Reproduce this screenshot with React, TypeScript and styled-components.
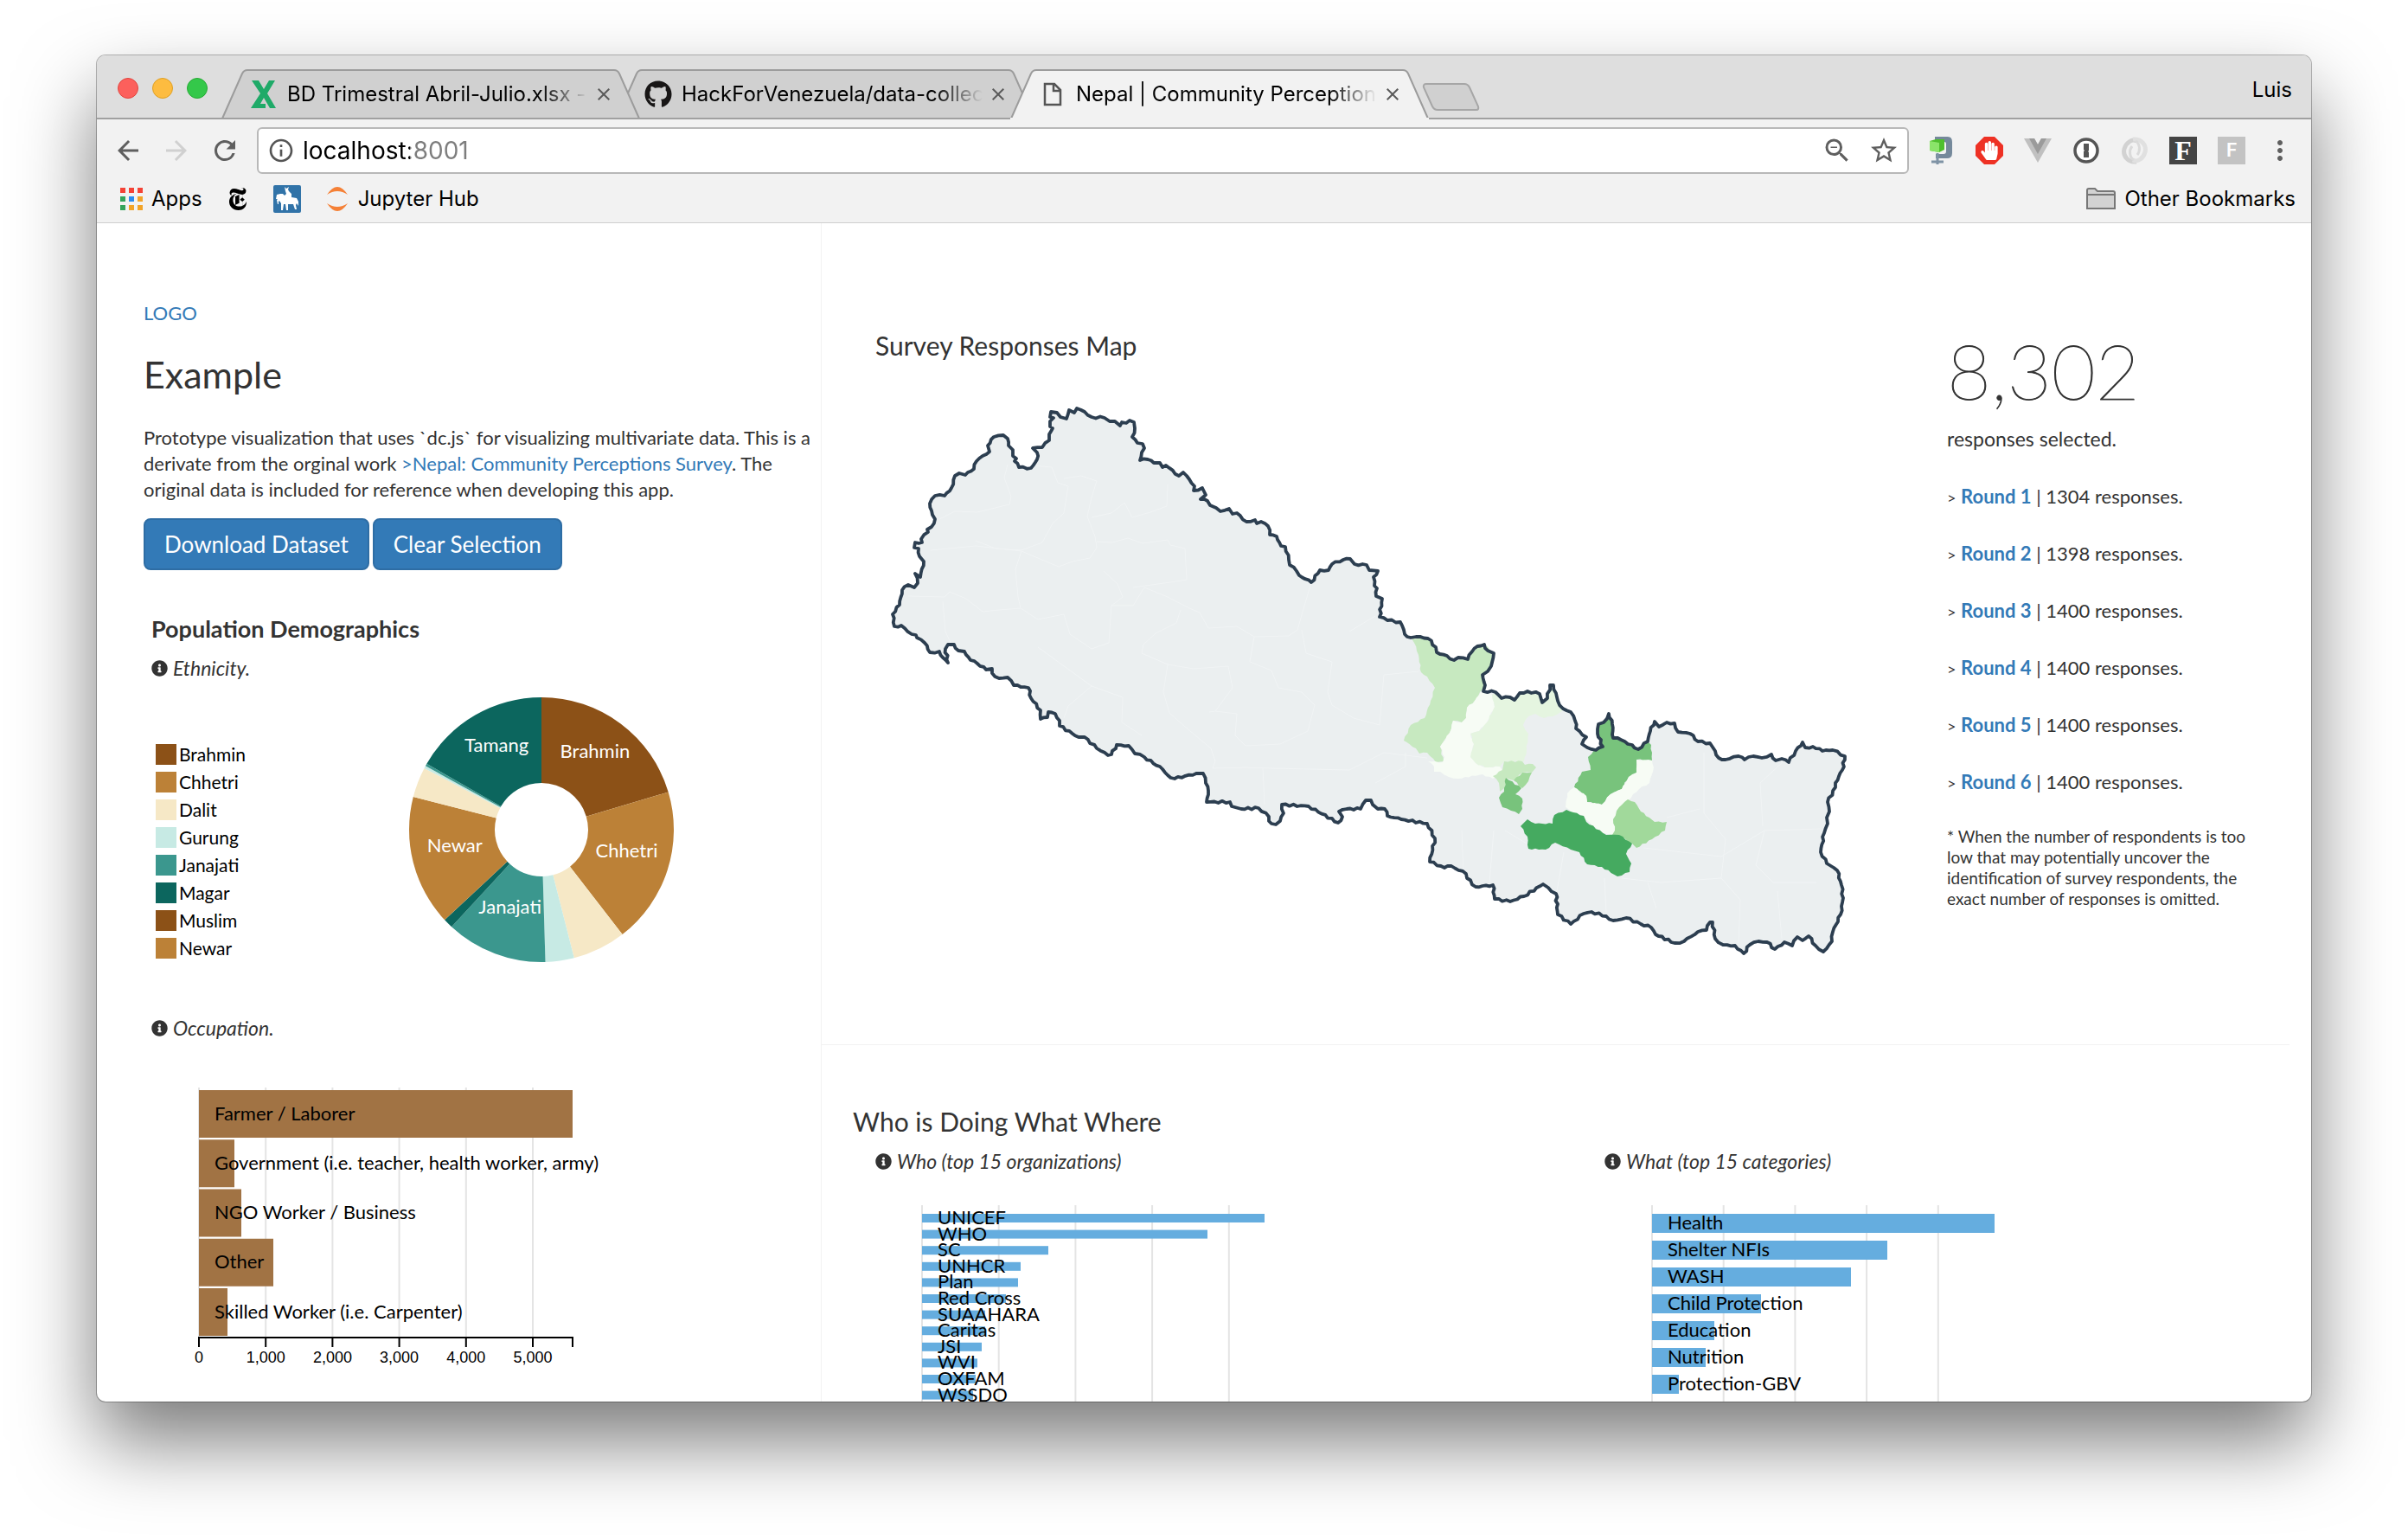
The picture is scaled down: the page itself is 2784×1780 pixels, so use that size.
import React from "react";
import styled, { createGlobalStyle, css } from "styled-components";
import {
  MdArrowBack,
  MdArrowForward,
  MdRefresh,
  MdInfoOutline,
  MdStarBorder,
  MdZoomOut,
  MdMoreVert,
  MdClose,
} from "react-icons/md";
import { FaGithub, FaInfoCircle, FaHandPaper } from "react-icons/fa";
import { SiNewyorktimes } from "react-icons/si";

const PAGE_FONT = `Lato, "Open Sans", sans-serif`;
const CHROME_FONT = `Inter, Roboto, "Liberation Sans", sans-serif`;

const GlobalStyle = createGlobalStyle`
  *, *::before, *::after { box-sizing: border-box; }
  body { margin: 0; background: #fff; }
  h1, h2, h3, p, ul, figure { margin: 0; padding: 0; font-weight: 400; }
  ul { list-style: none; }
  button, input { font: inherit; }
`;

/* ---------- window ---------- */

const Desktop = styled.div`
  height: 100vh;
  min-height: 900px;
  padding: 64px 112px 160px;
  display: flex;
  overflow: hidden;
`;

const Window = styled.div`
  flex: 1;
  min-width: 0;
  display: flex;
  flex-direction: column;
  overflow: hidden;
  border-radius: 10px;
  background: #fff;
  box-shadow: 0 0 0 1px rgba(0, 0, 0, 0.28), 0 46px 90px rgba(0, 0, 0, 0.52);
`;

const TabStrip = styled.div`
  display: flex;
  align-items: flex-end;
  height: 74px;
  flex: none;
  padding-left: 24px;
  background: #dedede;
  box-shadow: inset 0 -2px 0 #a0a0a0;
  font: 24px/32px ${CHROME_FONT};
`;

const Lights = styled.div`
  display: flex;
  gap: 16px;
  align-self: flex-start;
  padding-top: 26px;
  width: 120px;
  flex: none;
`;

const Light = styled.button<{ $fill: string; $edge: string }>`
  width: 24px;
  height: 24px;
  padding: 0;
  border-radius: 50%;
  border: 1px solid ${(p) => p.$edge};
  background: ${(p) => p.$fill};
`;

const Tab = styled.div<{ $layer: number }>`
  position: relative;
  z-index: ${(p) => p.$layer};
  display: flex;
  align-items: center;
  width: 484px;
  height: 58px;
  flex: none;
  padding: 0 30px 0 33px;
  margin-right: -28px;
  color: #000;
`;

const TabShape = styled.svg`
  position: absolute;
  inset: 0;
  width: 100%;
  height: 100%;
  z-index: -1;
`;

const TabIcon = styled.span`
  display: flex;
  justify-content: center;
  width: 32px;
  margin-right: 11px;
  flex: none;
`;

const TabTitle = styled.span`
  flex: 1;
  min-width: 0;
  overflow: hidden;
  white-space: nowrap;
  mask-image: linear-gradient(to right, #000 84%, transparent);
`;

const TabClose = styled.button`
  display: flex;
  width: 24px;
  margin: 0 0 0 6px;
  padding: 0;
  border: 0;
  background: none;
  color: #5a5a5a;
  font-size: 24px;
`;

const NewTab = styled.button`
  align-self: flex-start;
  margin: 32px 0 0 20px;
  padding: 0;
  border: 0;
  background: none;
  display: flex;
`;

const Profile = styled.button`
  margin: 0 22px 18px auto;
  padding: 0;
  border: 0;
  background: none;
  font-size: 24px;
  line-height: 32px;
`;

const Toolbar = styled.div`
  display: flex;
  align-items: center;
  height: 72px;
  flex: none;
  padding: 0 8px 0 18px;
  background: #f2f2f2;
`;

const IconButton = styled.button<{ $dim?: boolean; $w?: number }>`
  display: flex;
  align-items: center;
  justify-content: center;
  width: ${(p) => p.$w ?? 56}px;
  flex: none;
  padding: 0;
  border: 0;
  background: none;
  font-size: 36px;
  color: ${(p) => (p.$dim ? "#d0d0d0" : "#5f5f5f")};
`;

const NavButtons = styled.div`
  display: flex;
  margin-left: -10px;
  width: 177px;
  flex: none;
`;

const Omnibox = styled.div`
  display: flex;
  align-items: center;
  flex: 1;
  min-width: 0;
  height: 54px;
  margin-right: 9px;
  padding-left: 10px;
  background: #fff;
  border: 2px solid #b8b8b8;
  border-radius: 6px;
`;

const Address = styled.input`
  flex: 1;
  min-width: 0;
  height: 40px;
  margin-left: 9px;
  padding: 0;
  border: 0;
  outline: 0;
  font: 28px/40px ${CHROME_FONT};
  color: transparent;
  background: linear-gradient(to right, #000 124px, #7d7d7d 124px);
  background-clip: text;
`;

const Bookmarks = styled.nav`
  display: flex;
  align-items: center;
  height: 48px;
  flex: none;
  padding: 0 18px 8px 27px;
  background: #f2f2f2;
  border-bottom: 1px solid #cfcfcf;
  font: 24px/32px ${CHROME_FONT};
`;

const Bookmark = styled.a<{ $end?: boolean }>`
  display: flex;
  align-items: center;
  gap: 10px;
  color: #000;
  text-decoration: none;
  margin-right: ${(p) => (p.$end ? 0 : 28)}px;
  ${(p) =>
    p.$end &&
    css`
      margin-left: auto;
    `}
`;

const FBadge = styled.span<{ $pale?: boolean }>`
  width: 32px;
  height: 32px;
  text-align: center;
  color: #fff;
  background: ${(p) => (p.$pale ? "#c3c3c3" : "#444")};
  font: ${(p) =>
    p.$pale
      ? `600 22px/32px Roboto, sans-serif`
      : `700 32px/32px "Liberation Serif", serif`};
`;

/* ---------- page ---------- */

const Page = styled.main`
  flex: 1;
  min-height: 0;
  display: grid;
  grid-template-columns: minmax(0, 838fr) minmax(0, 1722fr);
  font: 22px/30px ${PAGE_FONT};
  color: #333;
  overflow: hidden;
`;

const Link = styled.a<{ $bold?: boolean }>`
  color: #337ab7;
  text-decoration: none;
  font-weight: ${(p) => (p.$bold ? 700 : 400)};
`;

const Sidebar = styled.aside`
  padding: 89px 0 0 54px;
  border-right: 1px solid #f2f2f2;
`;

const Title = styled.h1`
  margin: 33px 0 35px;
  font-size: 43px;
  line-height: 46px;
`;

const Intro = styled.p`
  white-space: normal;
`;

const Actions = styled.div`
  display: flex;
  gap: 4px;
  margin-top: 18px;
`;

const PrimaryButton = styled.button`
  height: 60px;
  padding: 0 22px;
  color: #fff;
  background: #337ab7;
  border: 2px solid #2e6da4;
  border-radius: 8px;
  font-size: 26px;
`;

const Demographics = styled.section`
  padding-left: 9px;
`;

const SectionTitle = styled.h2`
  margin: 53px 0 15px;
  font-size: 27px;
  font-weight: 700;
`;

const ChartTitle = styled.h3`
  display: flex;
  align-items: center;
  gap: 6px;
  font-size: 23px;
  line-height: 30px;
  font-style: italic;
`;

const EthnicityChart = styled.div`
  display: flex;
  height: 386px;
`;

const Legend = styled.ul`
  display: flex;
  flex-direction: column;
  gap: 8px;
  width: 298px;
  padding: 73px 0 0 5px;
`;

const LegendItem = styled.li<{ $color: string }>`
  display: flex;
  align-items: center;
  gap: 3px;
  height: 24px;
  font-size: 21px;
  color: #000;
  &::before {
    content: "";
    width: 24px;
    height: 24px;
    background: ${(p) => p.$color};
  }
`;

const Chart = styled.svg`
  display: block;
  overflow: visible;
  font-family: ${PAGE_FONT};
`;

const Content = styled.div`
  min-width: 0;
`;

const MapSection = styled.section`
  display: grid;
  grid-template-columns: minmax(0, 1fr) 396px;
  margin-right: 25px;
  padding: 121px 0 88px 62px;
  border-bottom: 1px solid #f2f2f2;
`;

const Heading = styled.h2`
  font-size: 30px;
  line-height: 40px;
`;

const MapFigure = styled.svg`
  display: block;
  width: 1150px;
  max-width: 100%;
`;

const Stats = styled.div`
  width: 360px;
`;

const BigNumber = styled.p`
  font-size: 88px;
  line-height: 98px;
  font-weight: 100;
  -webkit-text-stroke: 1px #333;
`;

const Caption = styled.p`
  margin-top: 15px;
  font-size: 23px;
`;

const Rounds = styled.ul`
  display: flex;
  flex-direction: column;
  gap: 36px;
  margin: 37px 0 36px;
`;

const Caret = styled.span`
  font-size: 18px;
  line-height: 18px;
`;

const Footnote = styled.p`
  font-size: 19px;
  line-height: 24px;
`;

const Activity = styled.section`
  padding: 68px 0 0 36px;
`;

const ActivityCharts = styled.div`
  display: grid;
  grid-template-columns: minmax(0, 843fr) minmax(0, 817fr);
  padding: 11px 0 0 26px;
`;

/* ---------- data ---------- */

const BROWN = "#8c5117";
const OCHRE = "#bc8137";
const CREAM = "#f6e8c6";
const MINT = "#c7eae4";
const TEAL = "#3b978e";
const PINE = "#0c665e";

const legend = [
  { name: "Brahmin", color: BROWN },
  { name: "Chhetri", color: OCHRE },
  { name: "Dalit", color: CREAM },
  { name: "Gurung", color: MINT },
  { name: "Janajati", color: TEAL },
  { name: "Magar", color: PINE },
  { name: "Muslim", color: BROWN },
  { name: "Newar", color: OCHRE },
];

const slices = [
  { to: 73.5, color: BROWN, label: "Brahmin" },
  { to: 142.3, color: OCHRE, label: "Chhetri" },
  { to: 165.7, color: CREAM },
  { to: 178.3, color: MINT },
  { to: 222.8, color: TEAL, label: "Janajati" },
  { to: 227, color: PINE },
  { to: 284.4, color: OCHRE, label: "Newar" },
  { to: 297.7, color: CREAM },
  { to: 298.8, color: MINT },
  { to: 299.9, color: TEAL },
  { to: 360, color: PINE, label: "Tamang" },
];

const occupations: [string, number][] = [
  ["Farmer / Laborer", 432],
  ["Government (i.e. teacher, health worker, army)", 41],
  ["NGO Worker / Business", 49],
  ["Other", 86],
  ["Skilled Worker (i.e. Carpenter)", 33],
];

const organizations: [string, number][] = [
  ["UNICEF", 396],
  ["WHO", 330],
  ["SC", 146],
  ["UNHCR", 114],
  ["Plan", 111],
  ["Red Cross", 97],
  ["SUAAHARA", 73],
  ["Caritas", 73],
  ["JSI", 69],
  ["WVI", 64],
  ["OXFAM", 62],
  ["WSSDO", 59],
];

const categories: [string, number][] = [
  ["Health", 396],
  ["Shelter NFIs", 272],
  ["WASH", 230],
  ["Child Protection", 126],
  ["Education", 72],
  ["Nutrition", 62],
  ["Protection-GBV", 31],
];

const rounds = [1304, 1398, 1400, 1400, 1400, 1400];

const border =
  "1032,710 1040,699 1043,682 1050,676 1057,679 1061,674 1058,663 1064,667 1068,649 1063,643 1062,634 1057,633 1058,627 1066,627 1065,623 1073,615 1072,612 1077,609 1081,600 1078,595 1075,582 1081,573 1092,573 1100,564 1104,550 1109,547 1116,549 1126,542 1129,533 1136,527 1144,522 1142,515 1149,505 1160,503 1165,507 1166,515 1171,520 1171,527 1175,530 1173,533 1178,540 1192,541 1199,531 1199,523 1194,518 1205,517 1213,509 1213,502 1217,495 1214,493 1214,487 1218,483 1214,482 1215,476 1222,477 1226,482 1233,484 1236,474 1242,477 1245,472 1254,476 1262,482 1277,483 1283,487 1289,487 1295,492 1297,488 1302,489 1306,486 1311,488 1312,495 1309,505 1315,512 1321,513 1323,518 1320,523 1318,532 1327,531 1334,535 1341,535 1344,540 1348,538 1363,550 1368,546 1372,550 1381,562 1380,567 1390,564 1394,572 1388,577 1396,579 1399,584 1406,587 1411,591 1421,588 1425,594 1430,593 1441,603 1451,601 1453,605 1458,603 1466,608 1468,618 1476,620 1481,631 1486,632 1490,647 1491,653 1499,660 1502,665 1516,673 1526,659 1536,659 1540,652 1553,647 1561,646 1566,652 1580,653 1583,659 1593,660 1588,667 1589,677 1592,680 1591,689 1598,692 1595,713 1604,717 1619,719 1623,728 1624,733 1631,737 1637,736 1651,738 1660,748 1661,754 1673,758 1681,763 1686,760 1697,762 1702,753 1708,747 1716,745 1720,752 1727,755 1724,770 1720,776 1714,780 1717,792 1715,799 1729,800 1736,807 1746,806 1751,809 1757,801 1766,799 1780,802 1783,812 1789,807 1792,792 1796,792 1801,810 1807,819 1816,823 1821,833 1822,842 1834,852 1829,860 1835,864 1845,867 1853,863 1847,848 1848,837 1854,835 1860,825 1864,837 1865,853 1874,855 1882,860 1887,861 1894,866 1905,857 1908,845 1913,834 1918,840 1927,835 1936,836 1940,846 1954,848 1963,857 1977,859 1983,868 1987,876 1995,878 2010,874 2017,878 2027,874 2037,876 2048,872 2053,879 2060,877 2068,881 2076,868 2084,858 2087,864 2096,863 2107,868 2119,867 2133,874 2130,890 2122,905 2122,910 2113,927 2115,938 2112,945 2113,952 2109,963 2105,985 2112,998 2124,1006 2129,1023 2131,1038 2128,1057 2119,1077 2118,1088 2108,1100 2099,1093 2091,1082 2084,1087 2078,1083 2072,1093 2063,1089 2052,1097 2043,1089 2033,1088 2023,1092 2016,1102 2006,1093 1992,1092 1983,1085 1980,1066 1977,1066 1973,1075 1963,1077 1947,1088 1936,1090 1914,1080 1909,1072 1897,1068 1880,1061 1865,1064 1857,1059 1840,1054 1831,1056 1816,1068 1801,1057 1799,1033 1790,1026 1784,1022 1762,1036 1746,1042 1728,1039 1726,1023 1706,1025 1696,1015 1695,1010 1678,1001 1670,1003 1653,996 1659,969 1650,952 1620,947 1604,943 1601,935 1593,935 1587,930 1585,925 1579,925 1573,935 1557,935 1548,938 1552,944 1547,951 1513,932 1482,930 1484,940 1480,949 1475,953 1470,952 1467,949 1467,944 1455,934 1435,935 1424,932 1422,927 1395,927 1397,914 1394,905 1391,894 1383,894 1358,900 1350,896 1344,889 1323,875 1312,871 1305,862 1291,861 1285,872 1281,873 1268,865 1254,852 1247,852 1225,839 1225,833 1220,825 1212,823 1211,829 1203,831 1203,821 1192,807 1189,795 1180,794 1172,792 1165,783 1155,784 1147,778 1147,773 1140,774 1130,767 1122,763 1115,753 1108,752 1103,745 1096,745 1093,750 1096,766 1090,760 1086,753 1075,754 1069,743 1060,737 1059,734 1054,733 1042,723 1034,724";

const districts = [
  { fill: "#c7e9c0", points: "1632,738 1651,738 1660,748 1661,754 1673,758 1681,763 1697,762 1708,747 1716,745 1727,755 1724,770 1714,780 1717,792 1714,797 1711,800 1705,810 1696,818 1695,830 1690,835 1680,833 1676,847 1665,863 1669,880 1660,881 1650,870 1641,871 1637,865 1623,856 1631,838 1647,830 1654,810 1659,795 1650,782 1643,777 1640,757 1635,743" },
  { fill: "#f7fcf5", points: "1712,799 1725,803 1728,817 1719,835 1710,845 1700,848 1704,860 1700,875 1706,882 1717,887 1734,886 1737,891 1726,900 1714,895 1686,900 1675,898 1665,892 1658,892 1658,886 1651,880 1668,881 1670,875 1665,863 1676,847 1680,833 1690,835 1695,830 1696,818 1705,810" },
  { fill: "#e5f5e0", points: "1725,803 1729,801 1736,807 1746,806 1751,809 1757,801 1766,799 1780,802 1783,812 1789,807 1792,792 1796,792 1801,810 1807,821 1800,826 1785,830 1775,825 1767,828 1761,838 1767,848 1765,867 1762,880 1739,880 1734,886 1717,887 1706,882 1700,875 1704,860 1700,848 1710,845 1719,835 1728,817" },
  { fill: "#c7e9c0", points: "1739,880 1760,880 1763,884 1772,883 1776,887 1771,893 1760,893 1750,902 1741,899 1741,908 1734,915 1733,905 1726,897 1737,890" },
  { fill: "#a1d99b", points: "1771,893 1767,903 1760,911 1750,902 1760,893" },
  { fill: "#78c37c", points: "1741,899 1759,911 1752,918 1760,923 1760,935 1756,941 1747,937 1737,933 1733,922 1739,915" },
  { fill: "#78c37c", points: "1853,863 1847,848 1848,837 1854,835 1860,825 1864,837 1865,853 1874,855 1882,860 1894,866 1905,857 1909,861 1910,879 1892,878 1892,893 1883,898 1875,912 1862,918 1852,930 1835,927 1834,920 1820,910 1829,892 1839,890 1836,875 1843,867" },
  { fill: "#f7fcf5", points: "1910,879 1912,887 1907,905 1895,912 1882,925 1872,933 1865,947 1867,960 1864,965 1852,963 1834,948 1831,943 1818,940 1810,933 1812,917 1820,910 1834,920 1835,927 1852,930 1862,918 1875,912 1883,898 1892,893 1892,878" },
  { fill: "#a1d99b", points: "1882,924 1890,927 1897,938 1913,950 1927,950 1925,960 1910,970 1892,980 1887,975 1874,967 1864,965 1867,960 1865,947 1872,933" },
  { fill: "#45aa60", points: "1766,947 1775,952 1795,952 1797,942 1811,936 1831,943 1834,950 1857,965 1872,965 1887,975 1880,987 1886,998 1884,1008 1870,1013 1852,1002 1835,999 1826,985 1816,982 1798,974 1787,982 1767,981 1766,967 1758,955" },
];

const innerLines = [
  "M1165,537 1161,552 1169,574 1167,583 1130,592 1104,591 1086,600",
  "M1192,538 1216,540 1223,558 1235,562 1230,593 1217,605 1205,627 1181,636 1151,634 1128,625",
  "M1230,553 1250,550 1268,556 1262,575 1257,597 1266,620 1268,633 1260,645 1240,649 1224,655 1207,648 1181,637 1128,631 1076,636",
  "M1268,626 1286,627 1304,622 1321,628 1350,624 1353,630 1370,634 1372,670 1353,673 1310,679",
  "M1350,560 1349,585 1330,592 1309,598 1300,581 1285,593 1262,598",
  "M1181,637 1174,658 1177,690 1180,703 1155,705 1136,707 1117,692 1098,684 1092,690 1050,689",
  "M1090,695 1093,730 1100,745",
  "M1180,703 1200,716 1230,710 1237,733 1262,750 1282,743 1285,700 1298,690 1292,675 1276,660",
  "M1285,700 1310,700 1323,679 1350,690 1375,703 1387,708 1397,726 1430,724 1450,736 1490,735 1500,728 1516,673",
  "M1365,705 1360,720 1336,732 1322,745 1320,755 1350,768 1380,773 1420,770 1425,795 1405,822 1398,823",
  "M1200,748 1262,793 1298,806 1297,835 1320,850",
  "M1262,793 1235,816 1230,830",
  "M1350,768 1345,800 1352,824 1370,840 1400,865 1405,880 1402,888 1440,887 1470,888",
  "M1450,736 1445,765 1470,775 1478,795 1505,800 1520,815 1512,845 1480,860 1440,862 1428,850 1430,825 1405,822",
  "M1505,728 1510,755 1540,765 1535,800 1540,815 1565,830 1595,838",
  "M1560,730 1590,712",
  "M1595,838 1600,780 1640,776",
  "M1470,888 1560,890 1600,870 1650,876",
  "M1460,888 1462,930 M1590,905 1625,886 1625,870 M1690,960 1692,1010 M1727,960 1722,1020 M1740,960 1765,975",
  "M1808,985 1800,1030 M1875,1015 1920,1020 1990,1015 1995,970 1970,940 1970,870",
  "M1927,945 1965,935 M1900,980 1990,990 2040,960 2105,958",
  "M2040,960 2030,1000 2050,1020 2100,1020 M2010,1090 2012,1040 1990,1015 M2060,1085 2055,1030",
  "M2062,880 2035,905 2038,955 M1855,1015 1857,1055 M1905,1020 1915,1050",
];

/* Adds a small zigzag to the straight runs of a surveyed line. */
const roughen = (points: string, amount: number) => {
  const p = points.split(" ").map((s) => s.split(",").map(Number));
  const out: string[] = [];
  p.forEach(([x, y], i) => {
    const [nx, ny] = p[(i + 1) % p.length];
    const len = Math.hypot(nx - x, ny - y);
    out.push(`${x},${y}`);
    const steps = Math.floor(len / 4);
    for (let k = 1; k < steps; k++) {
      const t = k / steps;
      const off = amount * Math.sin(i * 7.3 + k * 2.6);
      out.push(
        `${(x + (nx - x) * t - ((ny - y) / len) * off).toFixed(1)},${(
          y + (ny - y) * t + ((nx - x) / len) * off
        ).toFixed(1)}`
      );
    }
  });
  return out.join(" ");
};

/* ---------- pieces ---------- */

const R = 153;
const HOLE = 54;

const polar = (angle: number, r: number) => {
  const a = (angle * Math.PI) / 180;
  return [R + r * Math.sin(a), R - r * Math.cos(a)];
};

const Donut = () => (
  <Chart width={306} height={342} viewBox="0 -19 306 342" role="img" aria-label="Ethnicity">
    {slices.map((s, i) => {
      const from = i ? slices[i - 1].to : 0;
      const [x1, y1] = polar(from, R);
      const [x2, y2] = polar(s.to, R);
      const [x3, y3] = polar(s.to, HOLE);
      const [x4, y4] = polar(from, HOLE);
      return (
        <path
          key={i}
          fill={s.color}
          d={`M${x1},${y1}A${R},${R} 0 0 1 ${x2},${y2}L${x3},${y3}A${HOLE},${HOLE} 0 0 0 ${x4},${y4}Z`}
        />
      );
    })}
    {slices.map((s, i) => {
      if (!s.label) return null;
      const [x, y] = polar(((i ? slices[i - 1].to : 0) + s.to) / 2, (R + HOLE) / 2);
      return (
        <text key={i} x={x} y={y} fontSize={22} fill="#fff" textAnchor="middle">
          {s.label}
        </text>
      );
    })}
  </Chart>
);

type BarsProps = {
  label: string;
  data: [string, number][];
  color: string;
  x0: number;
  top: number;
  first: number;
  bar: number;
  pitch: number;
  grid: number;
  gridLines: number;
  height: number;
  bottom: number;
  axis?: number;
};

const BarChart = (p: BarsProps) => (
  <Chart width={600} height={p.height} role="img" aria-label={p.label}>
    {Array.from({ length: p.gridLines }, (_, i) => (
      <path key={i} d={`M${p.x0 + i * p.grid},${p.top}V${p.bottom}`} stroke="#e4e4e4" strokeWidth={2} />
    ))}
    {p.data.map(([name, w], i) => (
      <rect key={name} x={p.x0} y={p.first + i * p.pitch} width={w} height={p.bar} fill={p.color} />
    ))}
    {p.data.map(([name], i) => (
      <text key={name} x={p.x0 + 18} y={p.first + i * p.pitch + p.bar / 2 + 7} fontSize={22} fill="#000">
        {name}
      </text>
    ))}
    {p.axis && (
      <>
        <path
          d={`M${p.x0},${p.bottom + 11}V${p.bottom}H${p.x0 + p.axis}V${p.bottom + 11}`}
          fill="none"
          stroke="#000"
          strokeWidth={2}
        />
        {Array.from({ length: p.gridLines }, (_, i) => (
          <React.Fragment key={i}>
            <path d={`M${p.x0 + i * p.grid},${p.bottom}v11`} stroke="#000" strokeWidth={2} />
            <text
              x={p.x0 + i * p.grid}
              y={p.bottom + 29}
              fontSize={18}
              fontFamily="'Liberation Sans', sans-serif"
              textAnchor="middle"
            >
              {i ? `${i},000` : "0"}
            </text>
          </React.Fragment>
        ))}
      </>
    )}
  </Chart>
);

const Shape = ({ active }: { active?: boolean }) => (
  <TabShape viewBox="0 0 484 58" preserveAspectRatio="none">
    <path
      d="M1,57 L24,5 Q26,1 30,1 H454 Q458,1 460,5 L483,57"
      fill={active ? "#f2f2f2" : "#d0d0d0"}
      stroke="#9c9c9c"
      strokeWidth="2"
    />
    <path d="M0,57H484" stroke={active ? "#f2f2f2" : "#a0a0a0"} strokeWidth="2" />
  </TabShape>
);

const XlsIcon = () => (
  <svg width="30" height="32" viewBox="0 0 30 32" fill="#1faa68">
    <path d="M1,0H9L15,10 21,0H28L19,15 29,32H22L15,20 11,27H17V32H0L11,15Z" />
  </svg>
);

const PageIcon = () => (
  <svg width="22" height="28" viewBox="0 0 22 28" fill="none" stroke="#555" strokeWidth="2.500">
    <path d="M2,2H13L20,9V26H2Z M12,2V10H20" />
  </svg>
);

const AppsIcon = () => {
  const colors = ["#f44336", "#f44336", "#f44336", "#34a35a", "#2a8cf0", "#f2a428", "#34a35a", "#f2a428", "#f2a428"];
  return (
    <svg width="26" height="26">
      {colors.map((c, i) => (
        <rect key={i} x={(i % 3) * 10} y={Math.floor(i / 3) * 10} width="6" height="6" fill={c} />
      ))}
    </svg>
  );
};

const RiderIcon = () => (
  <svg width="32" height="32" viewBox="0 0 32 32">
    <rect width="32" height="32" rx="2" fill="#3173a8" />
    <path
      fill="#fff"
      d="M13,2l2,2 3-2-1,3 1,2 3,3 0,4 6,1 2,4 0,5-2-3-1,2 1,5h-2l-2-6-6,0 0,7h-2l-1-7-2,0-1,7h-2l0-8-2-3-1,1 0,3-1,0-1-5 1-1-2,0 1-5 4-1 3,0 2,2 2-2-1-3z"
    />
  </svg>
);

const JupyterIcon = () => (
  <svg width="28" height="30" viewBox="0 0 28 30" fill="#f58137">
    <path d="M2,10Q14,-8 26,10Q14,2 2,10Z M2,20Q14,38 26,20Q14,28 2,20Z" />
  </svg>
);

const FolderIcon = () => (
  <svg width="34" height="26" viewBox="0 0 34 26" fill="#d2d2d2" stroke="#777" strokeWidth="2">
    <path d="M1,24V3Q1,1 3,1H10L13,4H31Q33,4 33,6V24Z" />
    <path d="M2,8H32" />
  </svg>
);

const ClampIcon = () => (
  <svg width="28" height="34" viewBox="0 0 28 34">
    <path d="M7,1H22Q27,1 27,7V20Q27,26 21,26H8V21H17Q20,21 20,18V9Q20,7 18,7H7Z" fill="#75899b" />
    <path d="M1,6L8,4H18V16L12,19L1,17Z" fill="#4fbf2e" />
    <path d="M1,6L12,8V19L1,17Z" fill="#8be46a" />
    <path d="M10,20V33M3,30H17" stroke="#7f93a5" strokeWidth="3" />
  </svg>
);

const StopIcon = () => (
  <svg width="32" height="32" viewBox="0 0 32 32">
    <path d="M10,0H22L32,10V22L22,32H10L0,22V10Z" fill="#ee3124" />
    <FaHandPaper x={5} y={5} size={22} color="#fff" />
  </svg>
);

const VIcon = () => (
  <svg width="32" height="28" viewBox="0 0 32 28">
    <path d="M0,0H12L16,7 20,0H32L16,28Z" fill="#c0c0c0" />
    <path d="M6,0H12L16,7 20,0H26L16,18Z" fill="#9b9b9b" />
  </svg>
);

const KeyholeIcon = () => (
  <svg width="30" height="30" viewBox="0 0 30 30">
    <circle cx="15" cy="15" r="13" fill="#fff" stroke="#555" strokeWidth="3.500" />
    <path d="M12,7h6v8l-1,1 1,1v6h-6v-7l1-1-1-1z" fill="#555" />
  </svg>
);

const RingIcon = () => (
  <svg width="32" height="32" viewBox="0 0 32 32" fill="none" strokeWidth="5">
    <path d="M18,29C8,30 2,22 4,14C6,7 13,2 18,5" stroke="#d2d2d2" />
    <path d="M14,3C24,2 30,10 28,18C26,25 19,30 14,27" stroke="#e0e0e0" />
    <path d="M17,5C22,8 23,16 19,21M15,27C10,24 9,16 13,11" stroke="#dadada" strokeWidth="3" />
  </svg>
);

const App = () => (
  <Desktop>
    <GlobalStyle />
    <Window>
      <TabStrip>
        <Lights>
          <Light aria-label="Close" $fill="#fc605c" $edge="#e2463f" />
          <Light aria-label="Minimize" $fill="#fdbc40" $edge="#dfa023" />
          <Light aria-label="Zoom" $fill="#34c84a" $edge="#27aa35" />
        </Lights>
        <Tab $layer={2}>
          <Shape />
          <TabIcon><XlsIcon /></TabIcon>
          <TabTitle>BD Trimestral Abril-Julio.xlsx -</TabTitle>
          <TabClose aria-label="Close tab"><MdClose /></TabClose>
        </Tab>
        <Tab $layer={1}>
          <Shape />
          <TabIcon><FaGithub size={32} color="#181616" /></TabIcon>
          <TabTitle>HackForVenezuela/data-collec</TabTitle>
          <TabClose aria-label="Close tab"><MdClose /></TabClose>
        </Tab>
        <Tab $layer={3}>
          <Shape active />
          <TabIcon><PageIcon /></TabIcon>
          <TabTitle>Nepal | Community Perceptions</TabTitle>
          <TabClose aria-label="Close tab"><MdClose /></TabClose>
        </Tab>
        <NewTab aria-label="New tab">
          <svg width="68" height="32" viewBox="0 0 68 32" fill="#d0d0d0" stroke="#a6a6a6" strokeWidth="2">
            <path d="M5,1H49Q53,1 55,5L65,27Q66,31 63,31H18Q14,31 12,27L2,5Q1,1 5,1Z" />
          </svg>
        </NewTab>
        <Profile>Luis</Profile>
      </TabStrip>

      <Toolbar>
        <NavButtons>
          <IconButton aria-label="Back"><MdArrowBack /></IconButton>
          <IconButton aria-label="Forward" $dim><MdArrowForward /></IconButton>
          <IconButton aria-label="Reload"><MdRefresh /></IconButton>
        </NavButtons>
        <Omnibox>
          <MdInfoOutline size={32} color="#555" />
          <Address aria-label="Address" defaultValue="localhost:8001" />
          <IconButton aria-label="Zoom out" $w={54}><MdZoomOut /></IconButton>
          <IconButton aria-label="Bookmark" $w={54}><MdStarBorder /></IconButton>
        </Omnibox>
        <IconButton aria-label="Archive"><ClampIcon /></IconButton>
        <IconButton aria-label="Blocker"><StopIcon /></IconButton>
        <IconButton aria-label="Vue"><VIcon /></IconButton>
        <IconButton aria-label="Passwords"><KeyholeIcon /></IconButton>
        <IconButton aria-label="Viewer"><RingIcon /></IconButton>
        <IconButton aria-label="Fonts"><FBadge>F</FBadge></IconButton>
        <IconButton aria-label="Flags"><FBadge $pale>F</FBadge></IconButton>
        <IconButton aria-label="Menu"><MdMoreVert /></IconButton>
      </Toolbar>

      <Bookmarks>
        <Bookmark href="#apps"><AppsIcon />Apps</Bookmark>
        <Bookmark href="#times" aria-label="Times"><SiNewyorktimes size={26} /></Bookmark>
        <Bookmark href="#rider" aria-label="Library"><RiderIcon /></Bookmark>
        <Bookmark href="#jupyter"><JupyterIcon />Jupyter Hub</Bookmark>
        <Bookmark href="#other" $end><FolderIcon />Other Bookmarks</Bookmark>
      </Bookmarks>

      <Page>
        <Sidebar>
          <Link href="#logo">LOGO</Link>
          <Title>Example</Title>
          <Intro>
            Prototype visualization that uses `dc.js` for visualizing multivariate data. This is a derivate from
            the orginal work <Link href="#nepal">&gt;Nepal: Community Perceptions Survey</Link>. The original data
            is included for reference when developing this app.
          </Intro>
          <Actions>
            <PrimaryButton>Download Dataset</PrimaryButton>
            <PrimaryButton>Clear Selection</PrimaryButton>
          </Actions>
          <Demographics>
            <SectionTitle>Population Demographics</SectionTitle>
            <ChartTitle><FaInfoCircle size={19} />Ethnicity.</ChartTitle>
            <EthnicityChart>
              <Legend>
                {legend.map((l) => (
                  <LegendItem key={l.name} $color={l.color}>{l.name}</LegendItem>
                ))}
              </Legend>
              <Donut />
            </EthnicityChart>
            <ChartTitle><FaInfoCircle size={19} />Occupation.</ChartTitle>
            <BarChart
              label="Occupation" data={occupations} color="#a17344" x0={55} top={54} first={57} bar={55}
              pitch={57.25} grid={77.2} gridLines={6} height={400} bottom={343} axis={432}
            />
          </Demographics>
        </Sidebar>

        <Content>
          <MapSection>
            <div>
              <Heading>Survey Responses Map</Heading>
              <MapFigure viewBox="1012 419 1150 700" role="img" aria-label="Survey responses by district">
                <polygon points={roughen(border, 1.2)} fill="#ebeff0" />
                {innerLines.map((d) => (
                  <path key={d} d={d} fill="none" stroke="#f1f4f5" strokeWidth={1} />
                ))}
                {districts.map((d, i) => (
                  <polygon key={i} points={roughen(d.points, 0.8)} fill={d.fill} />
                ))}
                <polygon
                  points={roughen(border, 1.2)}
                  fill="none"
                  stroke="#2c3e50"
                  strokeWidth={3.8}
                  strokeLinejoin="round"
                />
              </MapFigure>
            </div>
            <Stats>
              <BigNumber>8,302</BigNumber>
              <Caption>responses selected.</Caption>
              <Rounds>
                {rounds.map((n, i) => (
                  <li key={i}>
                    <Caret>&gt;</Caret> <Link $bold href={`#round-${i + 1}`}>Round {i + 1}</Link> | {n} responses.
                  </li>
                ))}
              </Rounds>
              <Footnote>
                * When the number of respondents is too low that may potentially uncover the identification of
                survey respondents, the exact number of responses is omitted.
              </Footnote>
            </Stats>
          </MapSection>

          <Activity>
            <Heading>Who is Doing What Where</Heading>
            <ActivityCharts>
              <div>
                <ChartTitle><FaInfoCircle size={19} />Who (top 15 organizations)</ChartTitle>
                <BarChart
                  label="Who" data={organizations} color="#65addf" x0={54} top={36} first={46} bar={10}
                  pitch={18.6} grid={88.7} gridLines={5} height={400} bottom={400}
                />
              </div>
              <div>
                <ChartTitle><FaInfoCircle size={19} />What (top 15 categories)</ChartTitle>
                <BarChart
                  label="What" data={categories} color="#65addf" x0={55} top={36} first={46} bar={22}
                  pitch={31} grid={82.7} gridLines={5} height={400} bottom={400}
                />
              </div>
            </ActivityCharts>
          </Activity>
        </Content>
      </Page>
    </Window>
  </Desktop>
);

export default App;
